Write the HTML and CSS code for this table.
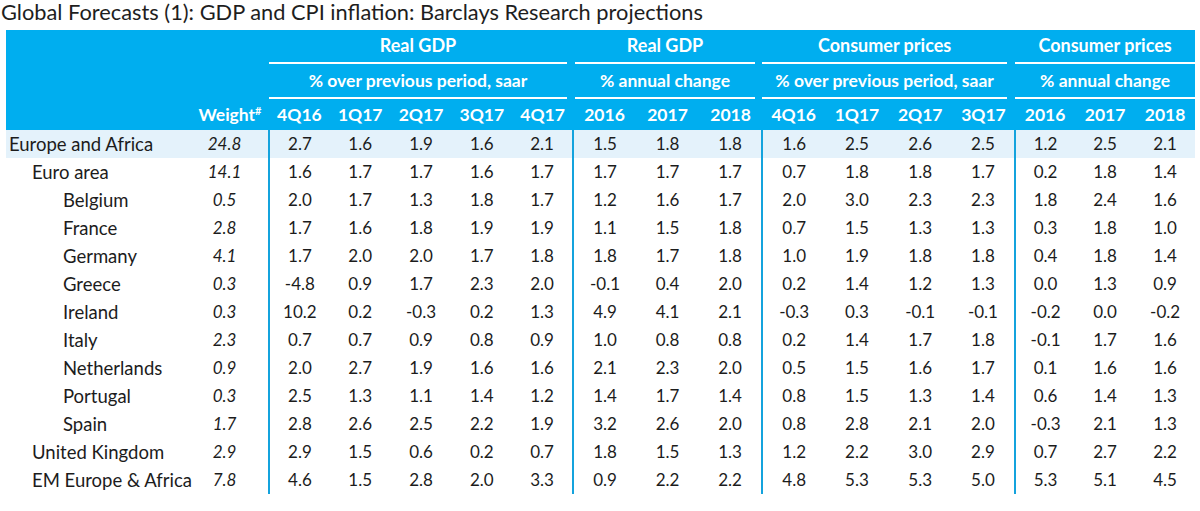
FILE: index.html
```html
<!DOCTYPE html>
<html lang="en">
<head>
<meta charset="utf-8">
<title>Global Forecasts</title>
<link rel="stylesheet" href="styles.css">
</head>
<body>
<h1 class="title">Global Forecasts (1): GDP and CPI inflation: Barclays Research projections</h1>
<table class="fc">
  <colgroup>
    <col class="c-label"><col class="c-weight">
    <col class="c-g1"><col class="c-g1"><col class="c-g1"><col class="c-g1"><col class="c-g1">
    <col class="c-g2"><col class="c-g2"><col class="c-g2">
    <col class="c-g3"><col class="c-g3"><col class="c-g3"><col class="c-g3">
    <col class="c-g4"><col class="c-g4"><col class="c-g4">
  </colgroup>
  <thead>
    <tr class="h1">
      <th></th><th></th>
      <th colspan="5" class="grp"><div class="gl">Real GDP</div></th>
      <th colspan="3" class="grp"><div class="gl g2">Real GDP</div></th>
      <th colspan="4" class="grp"><div class="gl g3">Consumer prices</div></th>
      <th colspan="3" class="grp"><div class="gl g4">Consumer prices</div></th>
    </tr>
    <tr class="h2">
      <th></th><th></th>
      <th colspan="5" class="grp"><div class="gl">% over previous period, saar</div></th>
      <th colspan="3" class="grp"><div class="gl g2">% annual change</div></th>
      <th colspan="4" class="grp"><div class="gl g3">% over previous period, saar</div></th>
      <th colspan="3" class="grp"><div class="gl g4">% annual change</div></th>
    </tr>
    <tr class="h3">
      <th></th><th class="wh">Weight<sup>#</sup></th>
      <th>4Q16</th><th>1Q17</th><th>2Q17</th><th>3Q17</th><th>4Q17</th>
      <th>2016</th><th>2017</th><th>2018</th>
      <th>4Q16</th><th>1Q17</th><th>2Q17</th><th>3Q17</th>
      <th>2016</th><th>2017</th><th>2018</th>
    </tr>
  </thead>
  <tbody>
    <tr class="hl"><td class="lab l0">Europe and Africa</td><td class="w">24.8</td><td class="s">2.7</td><td>1.6</td><td>1.9</td><td>1.6</td><td>2.1</td><td class="s">1.5</td><td>1.8</td><td>1.8</td><td class="s">1.6</td><td>2.5</td><td>2.6</td><td>2.5</td><td class="s">1.2</td><td>2.5</td><td>2.1</td></tr>
    <tr><td class="lab l1">Euro area</td><td class="w">14.1</td><td class="s">1.6</td><td>1.7</td><td>1.7</td><td>1.6</td><td>1.7</td><td class="s">1.7</td><td>1.7</td><td>1.7</td><td class="s">0.7</td><td>1.8</td><td>1.8</td><td>1.7</td><td class="s">0.2</td><td>1.8</td><td>1.4</td></tr>
    <tr><td class="lab l2">Belgium</td><td class="w">0.5</td><td class="s">2.0</td><td>1.7</td><td>1.3</td><td>1.8</td><td>1.7</td><td class="s">1.2</td><td>1.6</td><td>1.7</td><td class="s">2.0</td><td>3.0</td><td>2.3</td><td>2.3</td><td class="s">1.8</td><td>2.4</td><td>1.6</td></tr>
    <tr><td class="lab l2">France</td><td class="w">2.8</td><td class="s">1.7</td><td>1.6</td><td>1.8</td><td>1.9</td><td>1.9</td><td class="s">1.1</td><td>1.5</td><td>1.8</td><td class="s">0.7</td><td>1.5</td><td>1.3</td><td>1.3</td><td class="s">0.3</td><td>1.8</td><td>1.0</td></tr>
    <tr><td class="lab l2">Germany</td><td class="w">4.1</td><td class="s">1.7</td><td>2.0</td><td>2.0</td><td>1.7</td><td>1.8</td><td class="s">1.8</td><td>1.7</td><td>1.8</td><td class="s">1.0</td><td>1.9</td><td>1.8</td><td>1.8</td><td class="s">0.4</td><td>1.8</td><td>1.4</td></tr>
    <tr><td class="lab l2">Greece</td><td class="w">0.3</td><td class="s">-4.8</td><td>0.9</td><td>1.7</td><td>2.3</td><td>2.0</td><td class="s">-0.1</td><td>0.4</td><td>2.0</td><td class="s">0.2</td><td>1.4</td><td>1.2</td><td>1.3</td><td class="s">0.0</td><td>1.3</td><td>0.9</td></tr>
    <tr><td class="lab l2">Ireland</td><td class="w">0.3</td><td class="s">10.2</td><td>0.2</td><td>-0.3</td><td>0.2</td><td>1.3</td><td class="s">4.9</td><td>4.1</td><td>2.1</td><td class="s">-0.3</td><td>0.3</td><td>-0.1</td><td>-0.1</td><td class="s">-0.2</td><td>0.0</td><td>-0.2</td></tr>
    <tr><td class="lab l2">Italy</td><td class="w">2.3</td><td class="s">0.7</td><td>0.7</td><td>0.9</td><td>0.8</td><td>0.9</td><td class="s">1.0</td><td>0.8</td><td>0.8</td><td class="s">0.2</td><td>1.4</td><td>1.7</td><td>1.8</td><td class="s">-0.1</td><td>1.7</td><td>1.6</td></tr>
    <tr><td class="lab l2">Netherlands</td><td class="w">0.9</td><td class="s">2.0</td><td>2.7</td><td>1.9</td><td>1.6</td><td>1.6</td><td class="s">2.1</td><td>2.3</td><td>2.0</td><td class="s">0.5</td><td>1.5</td><td>1.6</td><td>1.7</td><td class="s">0.1</td><td>1.6</td><td>1.6</td></tr>
    <tr><td class="lab l2">Portugal</td><td class="w">0.3</td><td class="s">2.5</td><td>1.3</td><td>1.1</td><td>1.4</td><td>1.2</td><td class="s">1.4</td><td>1.7</td><td>1.4</td><td class="s">0.8</td><td>1.5</td><td>1.3</td><td>1.4</td><td class="s">0.6</td><td>1.4</td><td>1.3</td></tr>
    <tr><td class="lab l2">Spain</td><td class="w">1.7</td><td class="s">2.8</td><td>2.6</td><td>2.5</td><td>2.2</td><td>1.9</td><td class="s">3.2</td><td>2.6</td><td>2.0</td><td class="s">0.8</td><td>2.8</td><td>2.1</td><td>2.0</td><td class="s">-0.3</td><td>2.1</td><td>1.3</td></tr>
    <tr><td class="lab l1">United Kingdom</td><td class="w">2.9</td><td class="s">2.9</td><td>1.5</td><td>0.6</td><td>0.2</td><td>0.7</td><td class="s">1.8</td><td>1.5</td><td>1.3</td><td class="s">1.2</td><td>2.2</td><td>3.0</td><td>2.9</td><td class="s">0.7</td><td>2.7</td><td>2.2</td></tr>
    <tr><td class="lab l1">EM Europe &amp; Africa</td><td class="w">7.8</td><td class="s">4.6</td><td>1.5</td><td>2.8</td><td>2.0</td><td>3.3</td><td class="s">0.9</td><td>2.2</td><td>2.2</td><td class="s">4.8</td><td>5.3</td><td>5.3</td><td>5.0</td><td class="s">5.3</td><td>5.1</td><td>4.5</td></tr>
  </tbody>
</table>
</body>
</html>
```
FILE: styles.css
```css
html, body {
  margin: 0;
  padding: 0;
  background: #ffffff;
}
body {
  font-family: Lato, "Open Sans", sans-serif;
  color: #1c1c1c;
}
.title {
  margin: 0;
  padding: 0 0 0 1px;
  height: 30px;
  line-height: 24px;
  font-size: 21.8px;
  font-weight: normal;
  color: #1e1e1e;
}
.fc {
  margin-left: 6px;
  width: 1189px;
  table-layout: fixed;
  border-collapse: collapse;
  border-spacing: 0;
  font-size: 17px;
}
.c-label { width: 183px; }
.c-weight { width: 80px; }
.c-g1 { width: 60.8px; }
.c-g2 { width: 63px; }
.c-g3 { width: 63.25px; }
.c-g4 { width: 60px; }

thead th {
  background: #00aeef;
  color: #ffffff;
  font-weight: bold;
  font-size: 17.5px;
  padding: 0;
  text-align: center;
  white-space: nowrap;
}
.h1 th, .h2 th { height: 34px; vertical-align: top; }
.h3 th { height: 31px; }
.h1 .gl { font-size: 18px; }
.gl {
  height: 32px;
  line-height: 31px;
  border-bottom: 2px solid #ffffff;
  margin: 0 6px 0 0;
}
.gl.g2 { margin: 0 7px 0 2px; }
.gl.g3 { margin: 0 8px 0 0; }
.gl.g4 { margin: 0 0 0 0; }
.h2 .gl { height: 33px; line-height: 33px; }
.wh { text-align: center; padding-right: 6px; }
.wh sup {
  font-size: 11px;
  vertical-align: 6px;
  margin-right: -8px;
}

tbody td {
  height: 28px;
  padding: 0;
  text-align: center;
  white-space: nowrap;
  line-height: 28px;
}
tbody td.s { border-left: 2px solid #14a3dd; }
tbody tr.hl td { background: #e4f2fb; }
.lab { text-align: left; font-size: 18.5px; }
.l0 { padding-left: 3px; }
.l1 { padding-left: 26px; }
.l2 { padding-left: 57px; }
.w { font-style: italic; padding-right: 8px; }
```
